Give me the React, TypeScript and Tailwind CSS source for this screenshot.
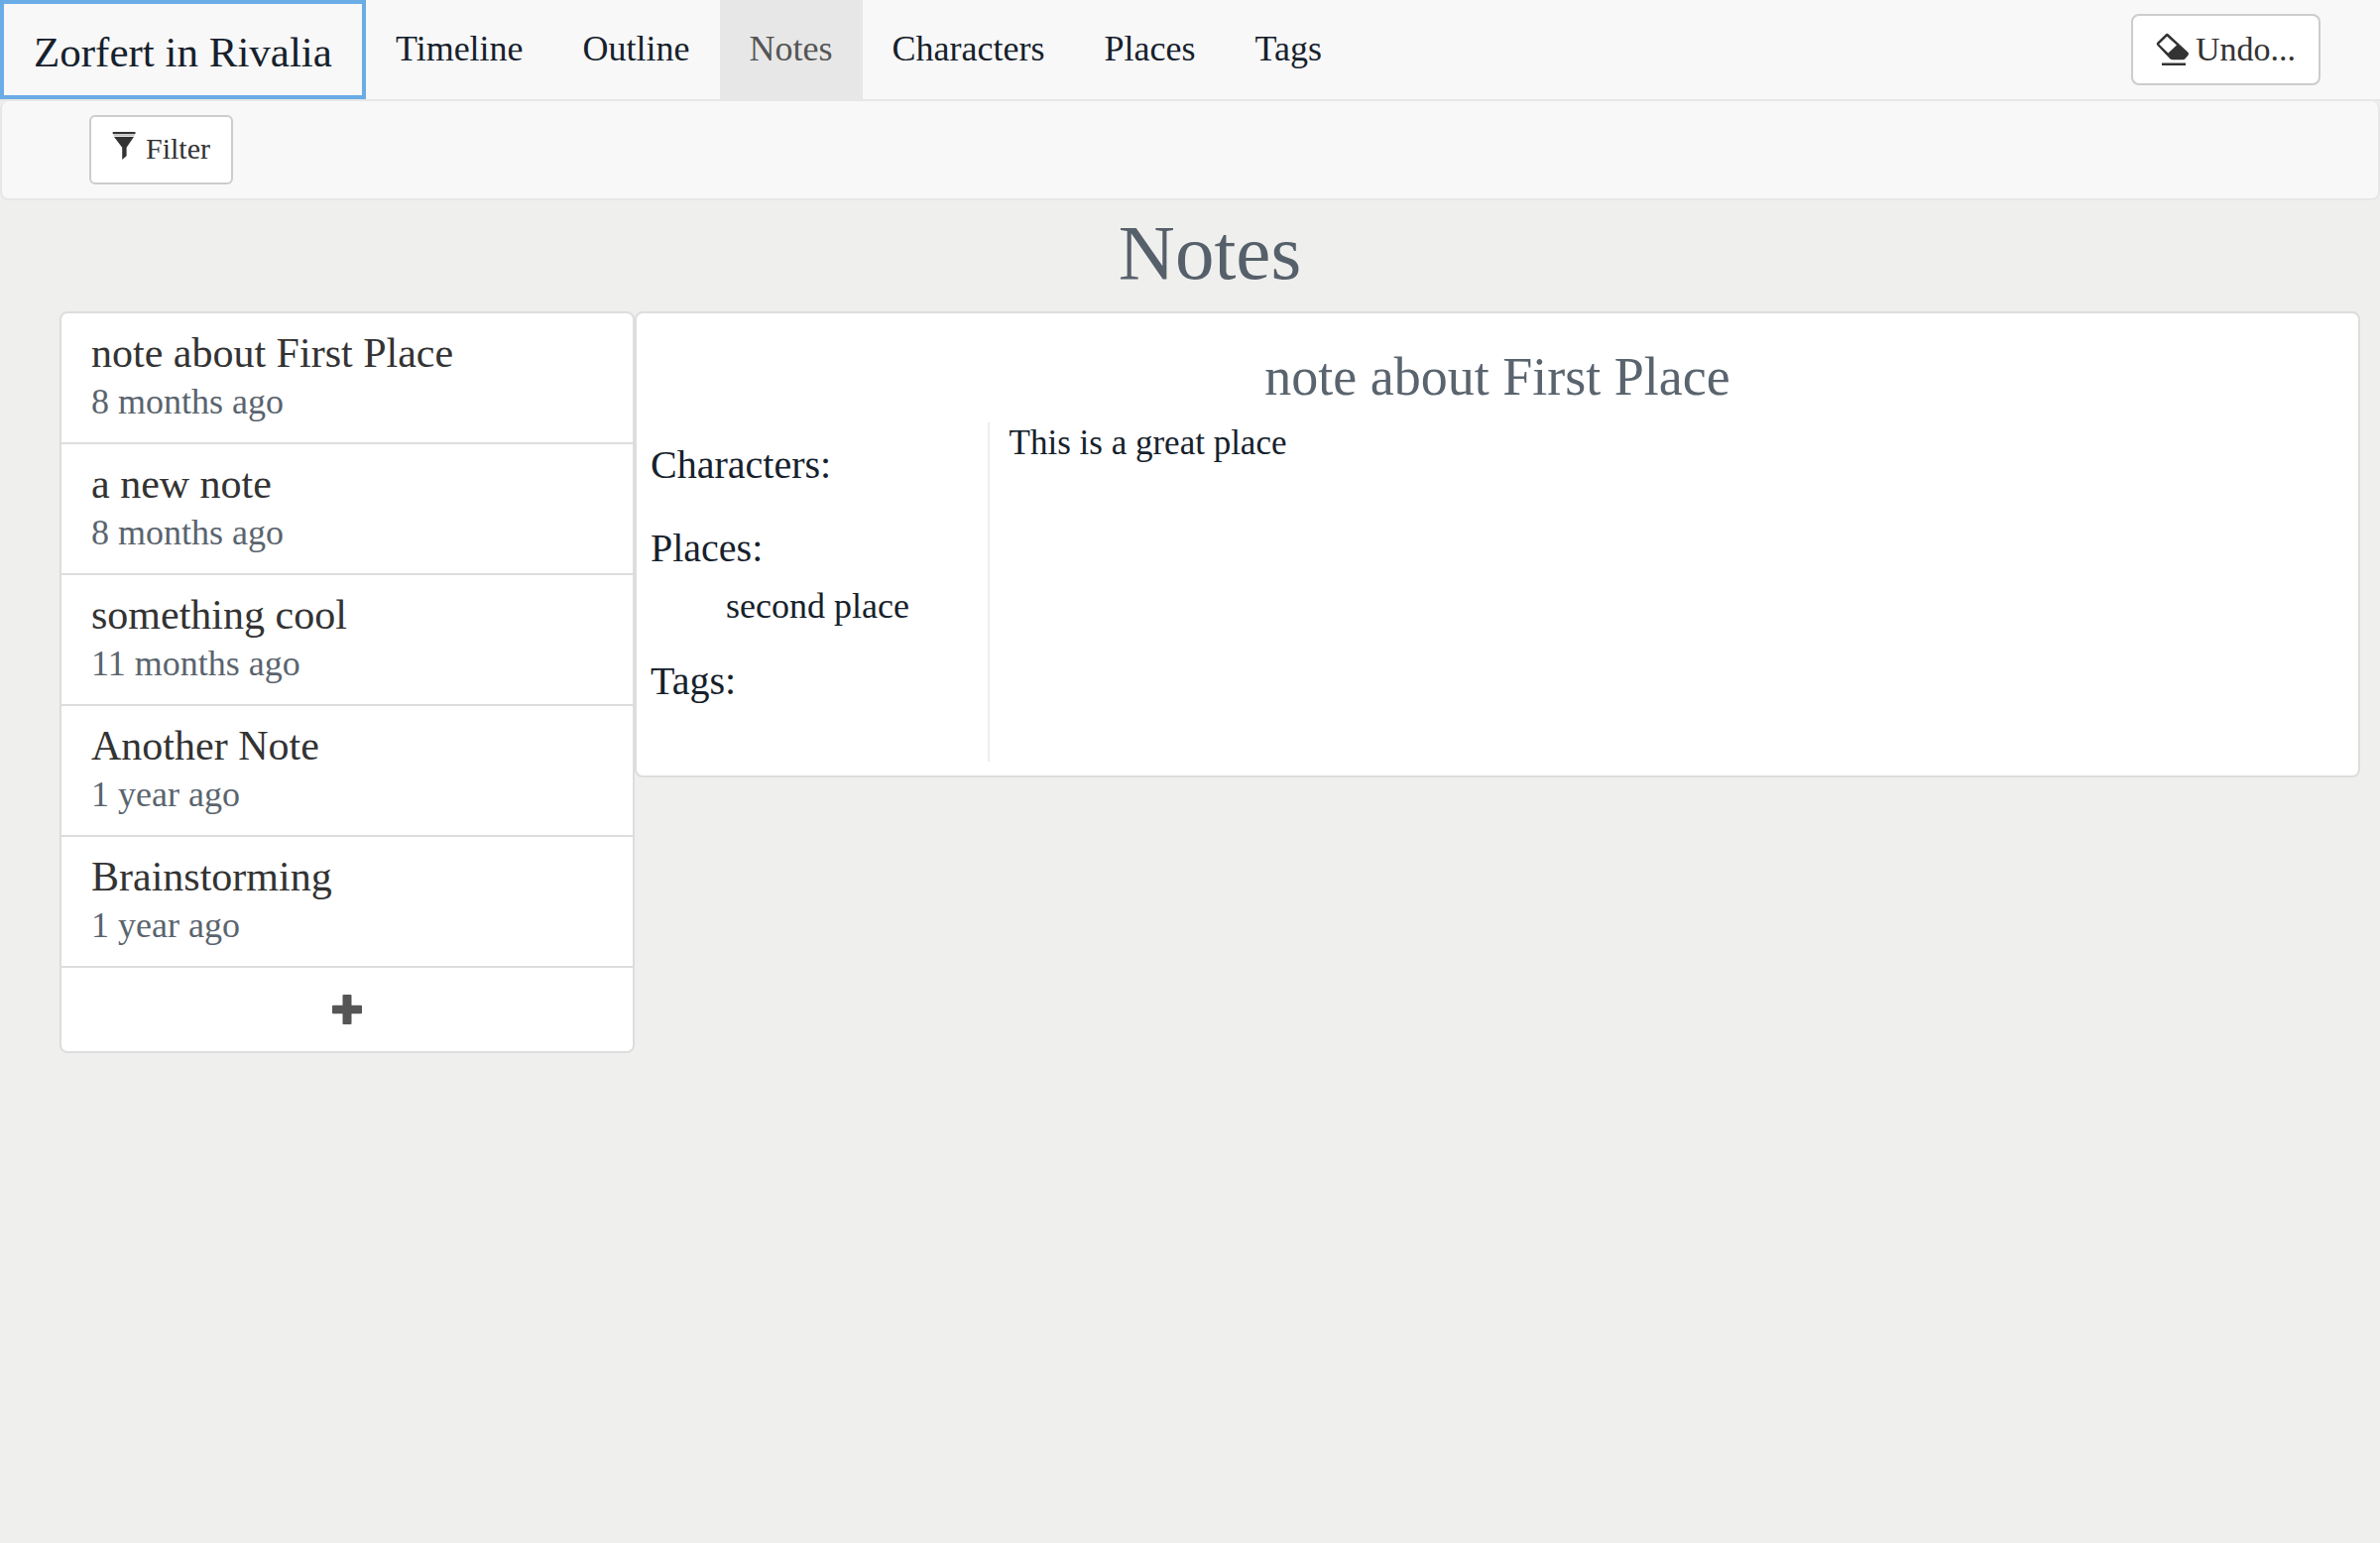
import { clsx } from "clsx";

interface Note {
  id: number;
  title: string;
  lastEdited: string;
}

const navItems = [
  "Timeline",
  "Outline",
  "Notes",
  "Characters",
  "Places",
  "Tags",
];

const notes: Note[] = [
  { id: 1, title: "note about First Place", lastEdited: "8 months ago" },
  { id: 2, title: "a new note", lastEdited: "8 months ago" },
  { id: 3, title: "something cool", lastEdited: "11 months ago" },
  { id: 4, title: "Another Note", lastEdited: "1 year ago" },
  { id: 5, title: "Brainstorming", lastEdited: "1 year ago" },
];

const attachments: { label: string; items: string[] }[] = [
  { label: "Characters", items: [] },
  { label: "Places", items: ["second place"] },
  { label: "Tags", items: [] },
];

const EraserIcon = () => (
  <svg
    viewBox="0 0 34 34"
    className="h-[34px] w-[34px] shrink-0"
    fill="currentColor"
    aria-hidden="true"
  >
    <path
      fillRule="evenodd"
      d="M9.6 1.7a2.4 2.4 0 0 1 3.4 0l18.9 17.6a2.8 2.8 0 0 1 .2 4l-2.6 3a3.2 3.2 0 0 1-2.4 1H17a4 4 0 0 1-2.800-1.100L1.600 13a2.400 2.400 0 0 1 0-3.400zM11.200 3.700l-8 7.800 9.200 9 8.600-8z"
    />
    <path d="M6 30.500h24V33H6z" />
  </svg>
);

const FilterIcon = () => (
  <svg
    viewBox="0 0 24 30"
    className="h-[30px] w-6 shrink-0"
    fill="currentColor"
    aria-hidden="true"
  >
    <rect x="0.6" y="1" width="23" height="2.2" rx="0.8" />
    <rect x="1.5" y="4.4" width="21" height="0.8" opacity="0.5" />
    <path d="M2 6h20l-7.4 10.8v8.4L10.2 29V16.8z" />
  </svg>
);

const PlusIcon = () => (
  <svg
    viewBox="0 0 30 30"
    className="h-[30px] w-[30px]"
    fill="currentColor"
    aria-hidden="true"
  >
    <path d="M11.5 0h7a1 1 0 0 1 1 1v9.7H29a1 1 0 0 1 1 1v6.6a1 1 0 0 1-1 1h-9.5V29a1 1 0 0 1-1 1h-7a1 1 0 0 1-1-1v-9.7H1a1 1 0 0 1-1-1v-6.6a1 1 0 0 1 1-1h9.5V1a1 1 0 0 1 1-1z" />
  </svg>
);

const Navbar = () => (
  <header className="flex items-start justify-between border-b-2 border-[#e7e7e7] bg-[#f8f8f8]">
    <nav className="flex">
      <a
        href="#files"
        className="border-4 border-[#6aace6] px-[30px] pt-6 pb-[18px] text-[43px] leading-[50px]"
      >
        Zorfert in Rivalia
      </a>
      {navItems.map((item) => (
        <a
          key={item}
          href={`#${item.toLowerCase()}`}
          className={clsx(
            "px-[30px] pt-7 pb-[30px] text-[36px] leading-[42px]",
            item === "Notes" && "bg-[#e7e7e7] text-[#555]",
          )}
        >
          {item}
        </a>
      ))}
    </nav>
    <button
      type="button"
      className="mt-[14px] mr-[60px] flex items-center gap-[6px] rounded-lg border-2 border-[#ccc] bg-white px-[23px] py-[13px] text-[34px] leading-[42px] text-[#333]"
    >
      <EraserIcon />
      Undo...
    </button>
  </header>
);

const SubNav = () => (
  <div className="flex rounded-lg border-2 border-t-0 border-[#e7e7e7] bg-[#f8f8f8] py-[14px] pl-[88px]">
    <button
      type="button"
      className="flex items-start gap-[10px] rounded-md border-2 border-[#ccc] bg-white px-[21px] pt-[14px] pb-4 text-[30px] leading-9 text-[#333]"
    >
      <FilterIcon />
      Filter
    </button>
  </div>
);

const NoteList = () => (
  <ul className="w-1/4 shrink-0 divide-y-2 divide-[#ddd] rounded-lg border-2 border-[#ddd] bg-white">
    {notes.map((note) => (
      <li key={note.id}>
        <a href={`#note-${note.id}`} className="block px-[30px] py-4">
          <h2 className="text-[42px] leading-12 text-[#333]">{note.title}</h2>
          <p className="text-[36px] leading-[50px] text-[#5a646e]">
            {note.lastEdited}
          </p>
        </a>
      </li>
    ))}
    <li>
      <button
        type="button"
        aria-label="Add note"
        className="flex h-[84px] w-full items-center justify-center text-[#555]"
      >
        <PlusIcon />
      </button>
    </li>
  </ul>
);

const NoteDetail = () => (
  <article className="grow rounded-lg border-2 border-[#ddd] bg-white px-[14px] pt-8 pb-[14px]">
    <h2 className="mb-[14px] text-center text-[54px] leading-16 text-[#5a646e]">
      note about First Place
    </h2>
    <div className="flex">
      <aside className="w-1/5 shrink-0 border-r-2 border-[#eee] py-5">
        {attachments.map(({ label, items }) => (
          <section key={label} className="pb-6">
            <h3 className="mb-[14px] text-[40px] leading-[46px]">{label}:</h3>
            {items.length > 0 && (
              <ul className="pb-2 pl-[76px] text-[36px] leading-[42px]">
                {items.map((item) => (
                  <li key={item}>{item}</li>
                ))}
              </ul>
            )}
          </section>
        ))}
      </aside>
      <p className="grow pl-5 text-[35px] leading-[42px]">
        This is a great place
      </p>
    </div>
  </article>
);

export default function App() {
  return (
    <div className="min-h-screen bg-[#efefed] font-['Liberation_Serif',serif] text-[#16212c]">
      <Navbar />
      <SubNav />
      <main className="pr-5 pl-[60px]">
        <h1 className="mb-[6px] text-center text-[79px] leading-[106px] text-[#56606a]">
          Notes
        </h1>
        <div className="flex items-start">
          <NoteList />
          <NoteDetail />
        </div>
      </main>
    </div>
  );
}
